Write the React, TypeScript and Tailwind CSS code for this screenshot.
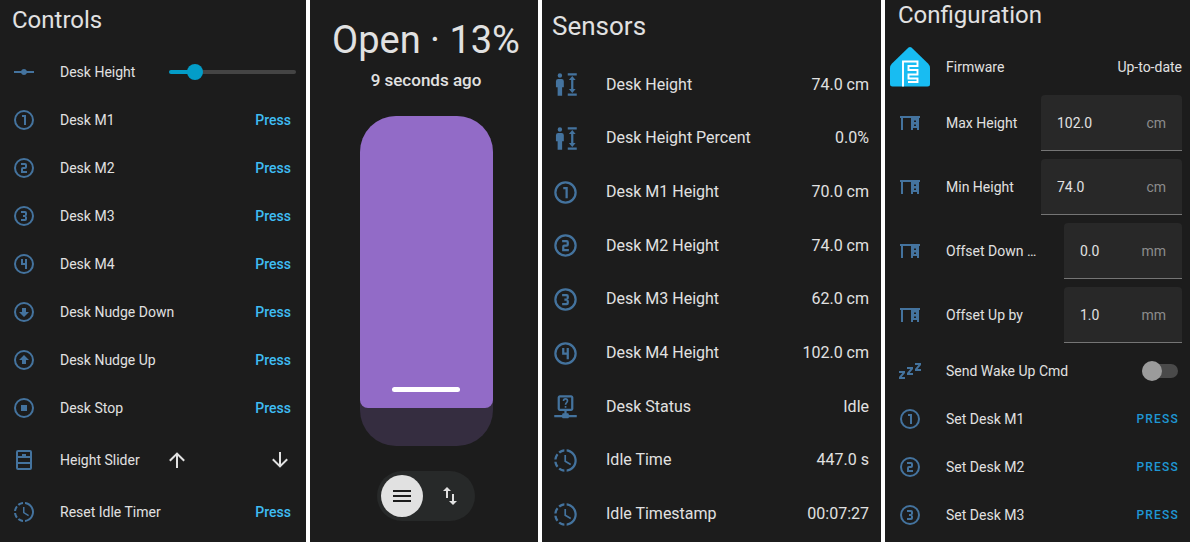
import { useState } from 'react';
import type { ReactNode } from 'react';

const ring =
  'M12 2A10 10 0 0 1 22 12A10 10 0 0 1 12 22A10 10 0 0 1 2 12A10 10 0 0 1 12 2M12 4A8 8 0 0 0 4 12A8 8 0 0 0 12 20A8 8 0 0 0 20 12A8 8 0 0 0 12 4';

const icons = {
  vertex:
    'M2 11H9.17C9.58 9.83 10.69 9 12 9C13.31 9 14.42 9.83 14.83 11H22V13H14.83C14.42 14.17 13.31 15 12 15C10.69 15 9.58 14.17 9.17 13H2V11Z',
  one: ring + 'M10 7H14V17H12V9H10V7Z',
  two: ring + 'M9 7H13A2 2 0 0 1 15 9V11A2 2 0 0 1 13 13H11V15H15V17H9V13A2 2 0 0 1 11 11H13V9H9V7Z',
  three:
    ring +
    'M15 15A2 2 0 0 1 13 17H9V15H13V13H11V11H13V9H9V7H13A2 2 0 0 1 15 9V10.5A1.5 1.5 0 0 1 13.5 12A1.5 1.5 0 0 1 15 13.5V15Z',
  four: ring + 'M9 7H11V11H13V7H15V17H13V13H9V7Z',
  nudgeDown: ring + 'M17 12L12 17L7 12H10V8H14V12H17Z',
  nudgeUp: ring + 'M7 12L12 7L17 12H14V16H10V12H7Z',
  stop: ring + 'M9 9V15H15V9Z',
  cabinet:
    'M6 2H18A2 2 0 0 1 20 4V20A2 2 0 0 1 18 22H6A2 2 0 0 1 4 20V4A2 2 0 0 1 6 2M6 4V8H10V6H14V8H18V4ZM6 10V14H18V10ZM6 16V20H18V16Z',
  clock:
    'M13 2.03V4.05C17.39 4.59 20.5 8.58 19.96 12.97C19.5 16.61 16.64 19.5 13 19.93V21.93C18.5 21.38 22.5 16.5 21.95 11C21.5 6.25 17.73 2.5 13 2.03M11 2.06C9.05 2.25 7.19 3 5.67 4.26L7.1 5.74C8.22 4.84 9.57 4.26 11 4.06V2.06M4.26 5.67C3 7.19 2.25 9.04 2.05 11H4.05C4.24 9.58 4.8 8.23 5.69 7.1L4.26 5.67M2.06 13C2.26 14.96 3.03 16.81 4.27 18.33L5.69 16.9C4.81 15.77 4.24 14.42 4.06 13H2.06M7.1 18.37L5.67 19.74C7.18 21 9.04 21.79 11 22V20C9.58 19.82 8.23 19.25 7.1 18.37M12.5 7V12.25L17 14.92L16.25 16.15L11 13V7H12.5Z',
  height:
    'M7 2A2 2 0 0 1 9 4A2 2 0 0 1 7 6A2 2 0 0 1 5 4A2 2 0 0 1 7 2M5.5 7H8.5A2 2 0 0 1 10.5 9V14.5H9V22H5V14.5H3.5V9A2 2 0 0 1 5.5 7M14 2H22V4H14ZM14 20H22V22H14ZM18 4.5L21 8H19V16H21L18 19.5L15 16H17V8H15Z',
  status:
    'M17 2C18.1 2 19 2.9 19 4V14C19 15.1 18.1 16 17 16H13V18H14C14.55 18 15 18.45 15 19.5H22V21.5H15C15 22 14.55 22.5 14 22.5H10C9.45 22.5 9 22 9 21.5H2V19.5H9C9 18.45 9.45 18 10 18H11V16H7C5.9 16 5 15.1 5 14V4C5 2.9 5.9 2 7 2H17M17 4H7V14H17V4M11.3 11.5H12.8V13H11.3ZM9.5 7A2.5 2.5 0 0 1 14.5 7C14.5 8.6 12.8 8.9 12.8 10.5H11.3C11.3 8.3 13 8.2 13 7A1 1 0 0 0 11 7Z',
  desk: 'M2 5H22V7H21V19H19V17H15V19H13V7H5V19H3V7H2ZM16 9.5V11H18V9.5ZM16 13.5V15H18V13.5Z',
  sleep:
    'M23 12H17V10L20.39 6H17V4H23V6L19.62 10H23V12M15 16H9V14L12.39 10H9V8H15V10L11.62 14H15V16M7 20H1V18L4.39 14H1V12H7V14L3.62 18H7V20Z',
  arrowUp: 'M13 20H11V8L5.5 13.5L4.08 12.08L12 4.16L19.92 12.08L18.5 13.5L13 8V20Z',
  arrowDown: 'M11 4H13V16L18.5 10.5L19.92 11.92L12 19.84L4.08 11.92L5.5 10.5L11 16V4Z',
  menu: 'M3 6H21V8H3ZM3 11H21V13H3ZM3 16H21V18H3Z',
  swap: 'M9 3L5 7H8V14H10V7H13M16 17V10H14V17H11L15 21L19 17H16Z',
};

type IconName = keyof typeof icons;

function Icon({ name, className = 'size-6 text-[#44739e]' }: { name: IconName; className?: string }) {
  return (
    <svg viewBox="0 0 24 24" fill="currentColor" fillRule="evenodd" aria-hidden="true" className={`shrink-0 ${className}`}>
      <path d={icons[name]} />
    </svg>
  );
}

const buttons: { icon: IconName; label: string }[] = [
  { icon: 'one', label: 'Desk M1' },
  { icon: 'two', label: 'Desk M2' },
  { icon: 'three', label: 'Desk M3' },
  { icon: 'four', label: 'Desk M4' },
  { icon: 'nudgeDown', label: 'Desk Nudge Down' },
  { icon: 'nudgeUp', label: 'Desk Nudge Up' },
  { icon: 'stop', label: 'Desk Stop' },
];

const sensors: { icon: IconName; label: string; value: string }[] = [
  { icon: 'height', label: 'Desk Height', value: '74.0 cm' },
  { icon: 'height', label: 'Desk Height Percent', value: '0.0%' },
  { icon: 'one', label: 'Desk M1 Height', value: '70.0 cm' },
  { icon: 'two', label: 'Desk M2 Height', value: '74.0 cm' },
  { icon: 'three', label: 'Desk M3 Height', value: '62.0 cm' },
  { icon: 'four', label: 'Desk M4 Height', value: '102.0 cm' },
  { icon: 'status', label: 'Desk Status', value: 'Idle' },
  { icon: 'clock', label: 'Idle Time', value: '447.0 s' },
  { icon: 'clock', label: 'Idle Timestamp', value: '00:07:27' },
];

const numbers = [
  { id: 'max-height', label: 'Max Height', value: '102.0', unit: 'cm', width: 'w-[141px]' },
  { id: 'min-height', label: 'Min Height', value: '74.0', unit: 'cm', width: 'w-[141px]' },
  { id: 'offset-down', label: 'Offset Down …', value: '0.0', unit: 'mm', width: 'w-[118px]' },
  { id: 'offset-up', label: 'Offset Up by', value: '1.0', unit: 'mm', width: 'w-[118px]' },
];

const presets: { icon: IconName; label: string }[] = [
  { icon: 'one', label: 'Set Desk M1' },
  { icon: 'two', label: 'Set Desk M2' },
  { icon: 'three', label: 'Set Desk M3' },
];

function PressRow({ icon, label }: { icon: IconName; label: string }) {
  return (
    <li className="flex h-12 items-center pr-[15px]">
      <Icon name={icon} />
      <span className="ml-6 grow">{label}</span>
      <button type="button" aria-label={`Press ${label}`} className="font-medium text-[#3fbdf3]">
        Press
      </button>
    </li>
  );
}

function Controls() {
  const [height, setHeight] = useState(16);
  const stop = `calc(8px + (100% - 16px) * ${height / 100})`;

  return (
    <section className="bg-[#1c1c1c] pl-3">
      <h2 className="flex h-12 items-start pt-1 text-2xl">Controls</h2>
      <ul>
        <li className="flex h-12 items-center pr-[10px]">
          <Icon name="vertex" />
          <label htmlFor="desk-height" className="ml-6 grow">
            Desk Height
          </label>
          <input
            id="desk-height"
            type="range"
            value={height}
            onChange={(e) => setHeight(Number(e.target.value))}
            style={{ backgroundImage: `linear-gradient(to right, #039dc8 ${stop}, #444 ${stop})` }}
            className="h-1 w-[127px] appearance-none rounded-full [&::-webkit-slider-thumb]:size-4 [&::-webkit-slider-thumb]:appearance-none [&::-webkit-slider-thumb]:rounded-full [&::-webkit-slider-thumb]:bg-[#039dc8]"
          />
        </li>
        {buttons.map((b) => (
          <PressRow key={b.label} icon={b.icon} label={b.label} />
        ))}
        <li className="flex h-14 items-center pr-[14px]">
          <Icon name="cabinet" />
          <span className="ml-6 grow">Height Slider</span>
          <div className="flex w-[127px] justify-between">
            <button type="button" aria-label="Raise desk">
              <Icon name="arrowUp" className="size-6" />
            </button>
            <button type="button" aria-label="Lower desk">
              <Icon name="arrowDown" className="size-6" />
            </button>
          </div>
        </li>
        <PressRow icon="clock" label="Reset Idle Timer" />
      </ul>
    </section>
  );
}

function Cover() {
  const [position, setPosition] = useState(88.5);

  return (
    <section className="flex flex-col items-center bg-[#1c1c1c] pt-5 pl-1">
      <h2 className="text-[38px] leading-10 whitespace-nowrap">Open · 13%</h2>
      <p className="mt-2 text-[17px] leading-6 font-medium">9 seconds ago</p>
      <div className="relative mt-6 h-[330px] w-[133px] overflow-hidden rounded-[36px] bg-[#352d40]">
        <div
          style={{ height: `${position}%` }}
          className="flex flex-col items-center justify-end rounded-b-lg bg-[#926bc7] pb-4"
        >
          <div className="h-[5px] w-[68px] rounded-full bg-white" />
        </div>
        <input
          type="range"
          aria-label="Cover position"
          step="any"
          value={position}
          onChange={(e) => setPosition(Number(e.target.value))}
          className="absolute inset-0 size-full opacity-0 [writing-mode:vertical-lr]"
        />
      </div>
      <div className="mt-[25px] flex gap-1.5 rounded-full bg-[#272929] p-1">
        <button type="button" aria-label="Position" className="flex size-[42px] items-center justify-center rounded-full bg-[#e1e1e1] text-[#1c1c1c]">
          <Icon name="menu" className="size-6" />
        </button>
        <button type="button" aria-label="Open and close" className="flex size-[42px] items-center justify-center rounded-full">
          <Icon name="swap" className="size-6" />
        </button>
      </div>
    </section>
  );
}

function Sensors() {
  return (
    <section className="bg-[#1c1c1c] pr-3 pl-[10px] text-base">
      <h2 className="flex h-[58px] items-start pt-[7px] text-[26px]">Sensors</h2>
      <ul className="grid min-h-[483px] auto-rows-fr">
        {sensors.map((s) => (
          <li key={s.label} className="flex items-center">
            <Icon name={s.icon} className="size-[27px] text-[#44739e]" />
            <span className="ml-[27px] grow">{s.label}</span>
            <span>{s.value}</span>
          </li>
        ))}
      </ul>
    </section>
  );
}

function FirmwareLogo() {
  return (
    <svg viewBox="0 0 40 40" aria-hidden="true" className="size-10 shrink-0">
      <path
        d="M18.5 .6Q20-.6 21.5 .6L38 16.5Q40 18.5 40 21V37Q40 39.5 37.5 39.5H2.5Q0 39.5 0 37V21Q0 18.5 2 16.5Z"
        fill="#18bcf2"
      />
      <path
        d="M13 39.5V14.5H27.5V19H18.5V23H27.5V27.5H18.5V31.5H27.5V35H18"
        fill="none"
        stroke="#fff"
        strokeWidth="1.9"
      />
    </svg>
  );
}

function ConfigRow({ children, className = 'h-12' }: { children: ReactNode; className?: string }) {
  return <li className={`flex items-center pl-[13px] ${className}`}>{children}</li>;
}

function Configuration() {
  return (
    <section className="bg-[#1c1c1c] pr-2">
      <h2 className="flex h-[43px] items-start pl-[13px] text-2xl leading-[30px]">Configuration</h2>
      <ul>
        <li className="flex h-12 items-center pl-[5px]">
          <FirmwareLogo />
          <span className="ml-4 grow">Firmware</span>
          <span>Up-to-date</span>
        </li>
        {numbers.map((n) => (
          <ConfigRow key={n.id} className="h-16">
            <Icon name="desk" />
            <label htmlFor={n.id} className="ml-6 grow whitespace-nowrap">
              {n.label}
            </label>
            <div className={`flex h-14 items-center rounded-t border-b border-[#757575] bg-[#282828] px-4 ${n.width}`}>
              <input id={n.id} defaultValue={n.value} inputMode="decimal" className="w-0 min-w-0 grow outline-none" />
              <span className="text-[#8c8c8c]">{n.unit}</span>
            </div>
          </ConfigRow>
        ))}
        <ConfigRow>
          <Icon name="sleep" />
          <label htmlFor="wake-up" className="ml-6 grow">
            Send Wake Up Cmd
          </label>
          <input
            id="wake-up"
            type="checkbox"
            role="switch"
            className="mr-1 flex h-[14px] w-9 appearance-none items-center rounded-full bg-[#4a4a4a] before:size-5 before:rounded-full before:bg-[#9b9b9b] checked:justify-end"
          />
        </ConfigRow>
        {presets.map((p) => (
          <ConfigRow key={p.label}>
            <Icon name={p.icon} />
            <span className="ml-6 grow">{p.label}</span>
            <button type="button" aria-label={`Press ${p.label}`} className="mr-[3px] text-xs font-medium tracking-widest text-[#1f97d4]">
              PRESS
            </button>
          </ConfigRow>
        ))}
      </ul>
    </section>
  );
}

export default function App() {
  return (
    <main className="grid min-h-screen grid-cols-[306fr_228fr_339fr_305fr] gap-1 bg-white pr-[10px] font-['Roboto',sans-serif] text-sm text-[#e1e1e1]">
      <Controls />
      <Cover />
      <Sensors />
      <Configuration />
    </main>
  );
}
